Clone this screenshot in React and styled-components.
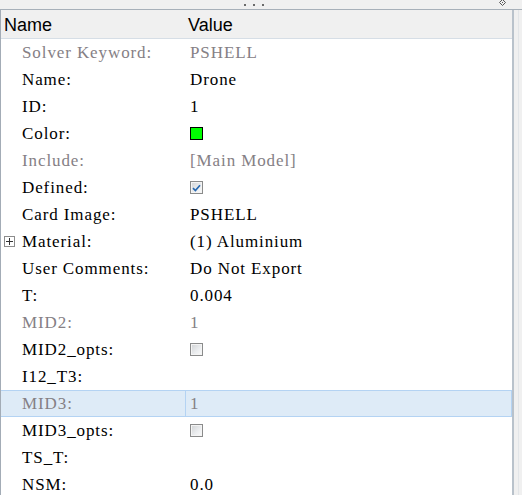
import React from 'react';
import styled, { createGlobalStyle } from 'styled-components';

const GlobalStyle = createGlobalStyle`
  html, body {
    margin: 0;
    padding: 0;
    background: #f0f0f0;
  }
`

const Frame = styled.div`
  width: 522px;
  height: 495px;
  display: flex;
  flex-direction: column;
  overflow: hidden;
  background: #f0f0f0;
`

const TitleStrip = styled.div`
  height: 9px;
  flex: none;
  display: grid;
  grid-template-columns: 1fr auto 1fr;
  align-items: center;
  border-bottom: 1px solid #a7b0b9;
  box-sizing: content-box;
`

const Grip = styled.div`
  grid-column: 2;
  display: flex;
  gap: 7px;
  margin-left: -14px;
  span {
    width: 2px;
    height: 2px;
    background: #6a6a6a;
  }
`

const PinSlot = styled.div`
  grid-column: 3;
  justify-self: end;
  margin-right: 16px;
  display: flex;
  margin-top: -4px;
`

const Body = styled.div`
  flex: 1;
  display: flex;
  min-height: 0;
`

const Panel = styled.div`
  width: 514px;
  flex: none;
  box-sizing: border-box;
  border-left: 1px solid #a3acb6;
  border-right: 2px solid #b9c2cb;
  background: #fff;
  display: flex;
  flex-direction: column;
  overflow: hidden;
`

const Gutter = styled.div`
  flex: 1;
  display: flex;
  justify-content: center;
  &::before {
    content: '';
    width: 1px;
    margin-left: 1px;
    background: #e2e5e8;
  }
`

const HeaderRow = styled.div`
  flex: none;
  height: 28px;
  display: grid;
  grid-template-columns: 184px 1fr;
  background: #f0f0f0;
  border-bottom: 1px solid #d6dee6;
  font-family: "Liberation Sans", Arial, sans-serif;
  font-size: 18px;
  color: #000;
  align-items: center;
`

const HeaderCell = styled.div`
  padding-left: ${p => p.$inset}px;
  padding-top: 2px;
`

/* property rows use a thin serif face, spaced out to a fixed-pitch feel */
const Row = styled.div`
  flex: none;
  height: 27px;
  box-sizing: border-box;
  display: grid;
  grid-template-columns: 184px 1fr;
  align-items: center;
  font-family: "Liberation Serif", "Times New Roman", serif;
  font-size: 17px;
  letter-spacing: 0.9px;
  color: ${p => (p.$muted ? '#858085' : '#000')};
  background: ${p => (p.$selected ? '#deebf7' : 'transparent')};
  border: 1px solid ${p => (p.$selected ? '#b4d3f3' : 'transparent')};
  border-left-width: 0;
`

const LabelCell = styled.div`
  display: flex;
  align-items: center;
  height: 100%;
  padding-left: 3px;
  white-space: nowrap;
`

const ExpanderSlot = styled.div`
  width: 18px;
  flex: none;
  display: flex;
  align-items: center;
`

const Expander = styled.div`
  width: 9px;
  height: 9px;
  border: 1px solid #8c8c8c;
  background: #fff;
  position: relative;
  &::before, &::after {
    content: '';
    position: absolute;
    background: #333;
  }
  &::before {
    left: 1px;
    right: 1px;
    top: 4px;
    height: 1px;
  }
  &::after {
    top: 1px;
    bottom: 1px;
    left: 4px;
    width: 1px;
  }
`

const ValueCell = styled.div`
  display: flex;
  align-items: center;
  height: 100%;
  padding-left: 4px;
  white-space: nowrap;
  border-left: 1px solid ${p => (p.$selected ? '#b4d3f3' : 'transparent')};
`

const Swatch = styled.div`
  width: 11px;
  height: 11px;
  border: 1px solid #000;
  background: ${p => p.$color};
`

const Check = styled.div`
  width: 11px;
  height: 11px;
  border: 1px solid #8a8b8b;
  background: linear-gradient(135deg, #d0d2d4 0%, #eceef0 60%, #fbfbfb 100%);
  box-shadow: inset 0 0 0 1px #f4f4f4;
  display: flex;
  align-items: center;
  justify-content: center;
`

const CheckMark = () => (
  <svg width="9" height="8" viewBox="0 0 9 8">
    <path d="M1 4.2 L3.4 6.5 L8 1.2" fill="none" stroke="#2768b0" strokeWidth="1.7" />
  </svg>
)

const Pin = () => (
  <svg width="7" height="7" viewBox="0 0 7 7">
    <path d="M3.5 0.5 L6.5 3.5 L3.5 6.5 L0.5 3.5 Z" fill="none" stroke="#555" strokeWidth="1" />
    <rect x="3" y="3" width="1" height="1" fill="#555" />
  </svg>
)

const rows = [
  { label: 'Solver Keyword:', value: 'PSHELL', muted: true },
  { label: 'Name:', value: 'Drone' },
  { label: 'ID:', value: '1' },
  { label: 'Color:', swatch: '#00ff00' },
  { label: 'Include:', value: '[Main Model]', muted: true },
  { label: 'Defined:', check: true, checked: true },
  { label: 'Card Image:', value: 'PSHELL' },
  { label: 'Material:', value: '(1) Aluminium', expandable: true },
  { label: 'User Comments:', value: 'Do Not Export' },
  { label: 'T:', value: '0.004' },
  { label: 'MID2:', value: '1', muted: true },
  { label: 'MID2_opts:', check: true },
  { label: 'I12_T3:', value: '' },
  { label: 'MID3:', value: '1', muted: true, selected: true },
  { label: 'MID3_opts:', check: true },
  { label: 'TS_T:', value: '' },
  { label: 'NSM:', value: '0.0' },
];

const renderValue = (row) => {
  if (row.swatch) return <Swatch $color={row.swatch} />;
  if (row.check) return <Check>{row.checked && <CheckMark />}</Check>;
  return row.value;
};

const App = () => (
  <Frame>
    <GlobalStyle />
    <TitleStrip>
      <Grip>
        <span />
        <span />
        <span />
      </Grip>
      <PinSlot>
        <Pin />
      </PinSlot>
    </TitleStrip>
    <Body>
      <Panel>
        <HeaderRow>
          <HeaderCell $inset={3}>Name</HeaderCell>
          <HeaderCell $inset={3}>Value</HeaderCell>
        </HeaderRow>
        {rows.map((row) => (
          <Row key={row.label} $muted={row.muted} $selected={row.selected}>
            <LabelCell>
              <ExpanderSlot>{row.expandable && <Expander />}</ExpanderSlot>
              {row.label}
            </LabelCell>
            <ValueCell $selected={row.selected}>{renderValue(row)}</ValueCell>
          </Row>
        ))}
      </Panel>
      <Gutter />
    </Body>
  </Frame>
);

export default App;
